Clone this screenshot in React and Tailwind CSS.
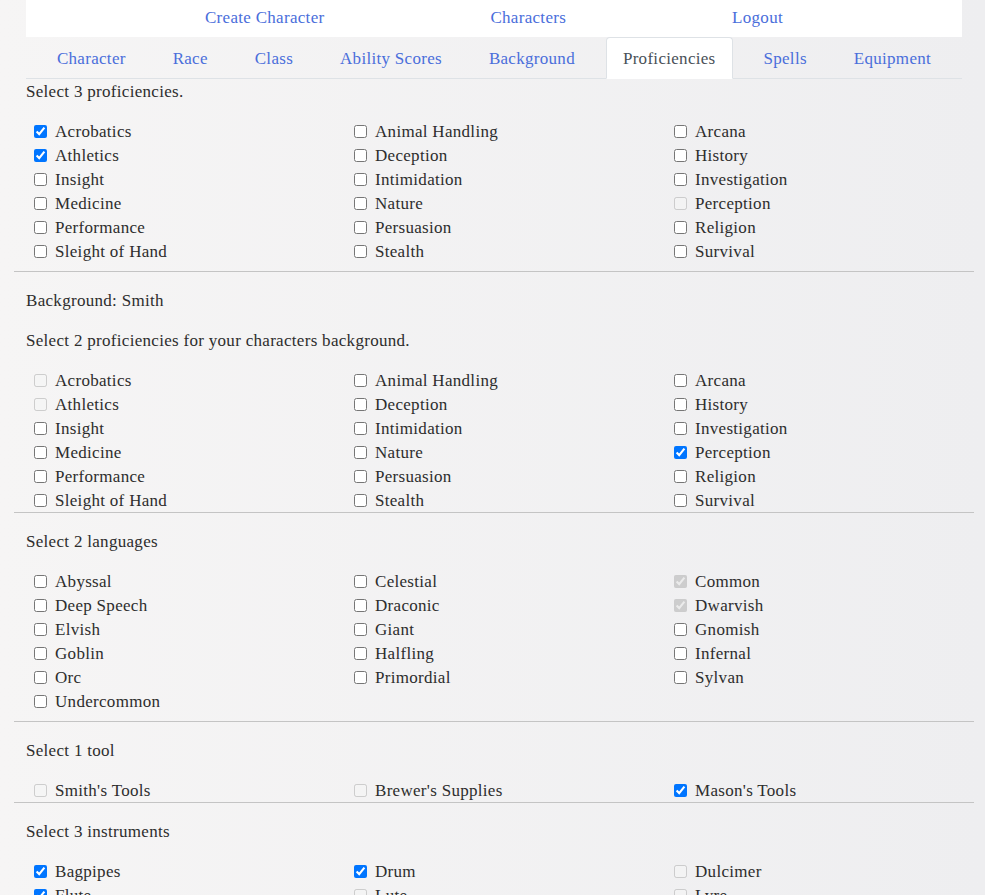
import React from "react";

const skills = [
  "Acrobatics", "Animal Handling", "Arcana", "Athletics", "Deception", "History",
  "Insight", "Intimidation", "Investigation", "Medicine", "Nature", "Perception",
  "Performance", "Persuasion", "Religion", "Sleight of Hand", "Stealth", "Survival",
];
const languages = [
  "Abyssal", "Celestial", "Common", "Deep Speech", "Draconic", "Dwarvish",
  "Elvish", "Giant", "Gnomish", "Goblin", "Halfling", "Infernal",
  "Orc", "Primordial", "Sylvan", "Undercommon",
];
const tools = ["Smith's Tools", "Brewer's Supplies", "Mason's Tools"];
const instruments = ["Bagpipes", "Drum", "Dulcimer", "Flute", "Lute", "Lyre", "Horn", "Pan Flute", "Shawm", "Viol"];

function CheckGrid({ items, checked = [], disabled = [] }) {
  return (
    <div className="grid grid-cols-3">
      {items.map((it) => (
        <label key={it} className="flex items-center h-[24px] pl-[20px]">
          <input
            type="checkbox"
            readOnly
            checked={checked.includes(it)}
            disabled={disabled.includes(it)}
            className="m-0 w-[13px] h-[13px] shrink-0"
          />
          <span className="ml-[8px] whitespace-nowrap pt-[2px]">{it}</span>
        </label>
      ))}
    </div>
  );
}

const tabs = ["Character", "Race", "Class", "Ability Scores", "Background", "Proficiencies", "Spells", "Equipment"];

export default function App() {
  return (
    <div
      className="min-h-screen w-full bg-gradient-to-r from-[#f6f5f5] to-[#eeeef0] text-[#2d2d2d] text-[17px] leading-[24px] tracking-[0.3px]"
      style={{ fontFamily: '"Liberation Serif", "Times New Roman", serif' }}
    >
      <div className="ml-[14px] w-[960px]">
        <div className="mx-[12px]">
          <nav className="flex justify-evenly bg-white h-[37px] pt-[6px] px-[13px] text-[#4a6edb]">
            <span>Create Character</span>
            <span>Characters</span>
            <span>Logout</span>
          </nav>
          <div className="flex justify-evenly border-b border-[#dee2e6] h-[42px]">
            {tabs.map((t) =>
              t === "Proficiencies" ? (
                <div
                  key={t}
                  className="px-[16px] pt-[9px] h-[42px] bg-white border border-[#dee2e6] border-b-white rounded-t-[4px] text-[#495057]"
                >
                  {t}
                </div>
              ) : (
                <div key={t} className="px-[16px] pt-[10px] text-[#4a6edb]">
                  {t}
                </div>
              )
            )}
          </div>
        </div>

        <p className="px-[12px] pt-[1px] h-[24px] mb-[16px]">Select 3 proficiencies.</p>
        <CheckGrid items={skills} checked={["Acrobatics", "Athletics"]} disabled={["Perception"]} />
        <hr className="mt-[8px] border-t border-[#c4c4c4]" />

        <p className="px-[12px] pt-[1px] h-[24px] mt-[16px]">Background: Smith</p>
        <p className="px-[12px] pt-[1px] h-[24px] mt-[16px] mb-[16px]">Select 2 proficiencies for your characters background.</p>
        <CheckGrid items={skills} checked={["Perception"]} disabled={["Acrobatics", "Athletics"]} />
        <hr className="border-t border-[#c4c4c4]" />

        <p className="px-[12px] pt-[1px] h-[24px] mt-[16px] mb-[16px]">Select 2 languages</p>
        <CheckGrid items={languages} checked={["Common", "Dwarvish"]} disabled={["Common", "Dwarvish"]} />
        <hr className="mt-[8px] border-t border-[#c4c4c4]" />

        <p className="px-[12px] pt-[1px] h-[24px] mt-[16px] mb-[16px]">Select 1 tool</p>
        <CheckGrid items={tools} checked={["Mason's Tools"]} disabled={["Smith's Tools", "Brewer's Supplies"]} />
        <hr className="border-t border-[#c4c4c4]" />

        <p className="px-[12px] pt-[1px] h-[24px] mt-[16px] mb-[16px]">Select 3 instruments</p>
        <CheckGrid
          items={instruments}
          checked={["Bagpipes", "Drum", "Flute"]}
          disabled={["Dulcimer", "Lute", "Lyre", "Horn", "Pan Flute", "Shawm", "Viol"]}
        />
        <div className="h-[40px]" />
      </div>
    </div>
  );
}
